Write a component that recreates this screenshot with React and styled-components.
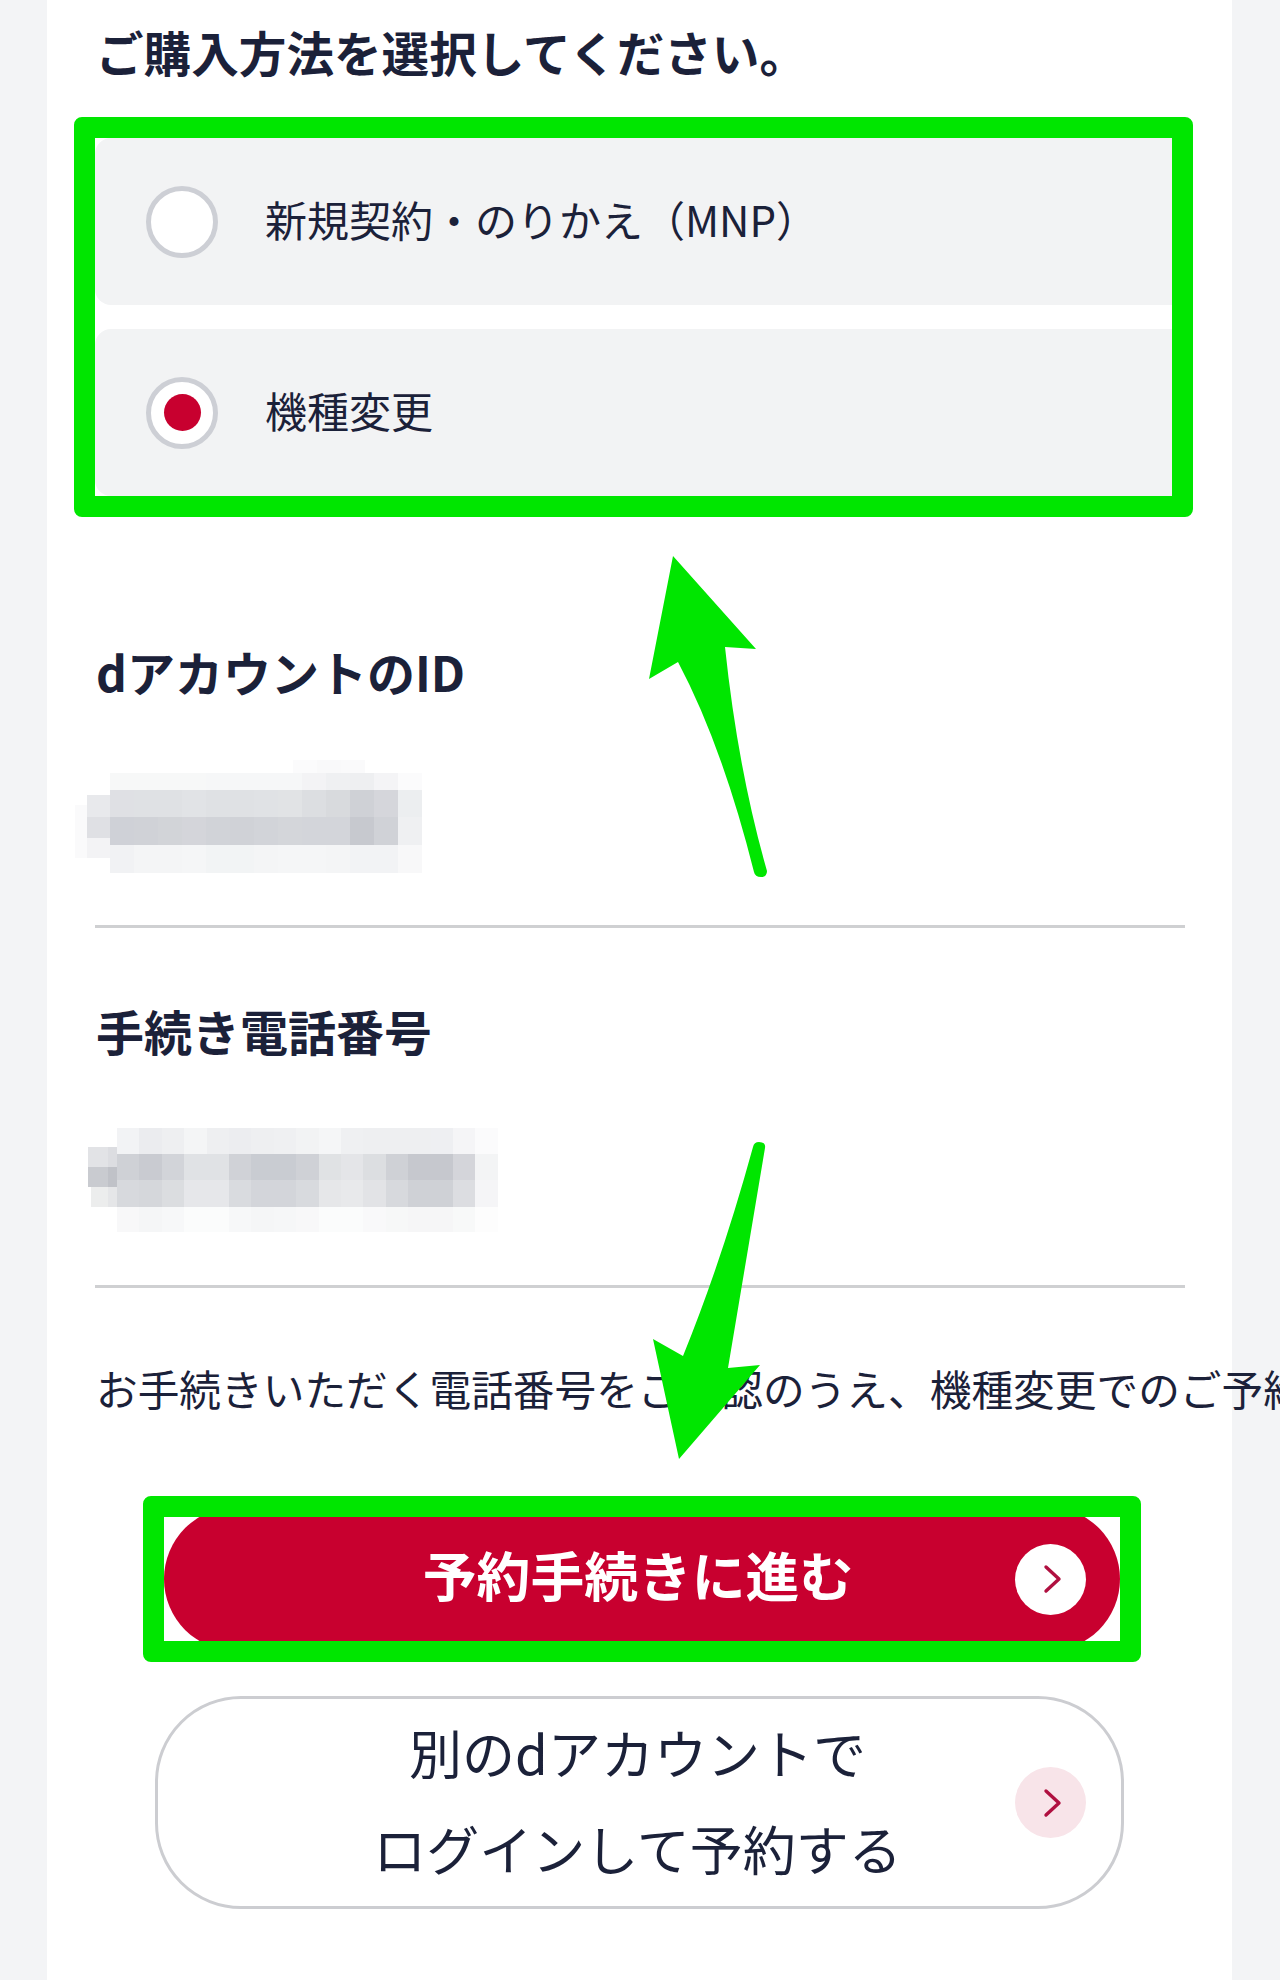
import React from 'react';
import styled, {createGlobalStyle} from 'styled-components';

const GlobalStyle = createGlobalStyle`
  html, body {
    margin: 0;
    padding: 0;
    overflow: hidden;
    background: #f3f4f6;
  }
  body {
    font-family: "Noto Sans CJK JP", "Noto Sans", sans-serif;
    color: #1b2139;
  }
`;

const Page = styled.div`
  position: relative;
  width: 1280px;
  height: 1980px;
  overflow: hidden;
  background: #f3f4f6;
`;

const Card = styled.main`
  width: 1185px;
  height: 1980px;
  margin-left: 47px;
  padding-top: 24px;
  box-sizing: border-box;
  background: #fff;
`;

const Heading = styled.h2`
  margin: 0 0 0 49px;
  font-size: 47.6px;
  line-height: 56px;
  font-weight: 700;
  letter-spacing: 0;
  white-space: nowrap;
`;

const Highlight = styled.div`
  box-sizing: border-box;
  border: 21px solid #00e600;
  border-radius: 8px;
  background: #fff;
`;

const OptionGroup = styled(Highlight)`
  width: 1119px;
  margin: 37px 0 0 27px;
  display: flex;
  flex-direction: column;
  gap: 24px;
`;

const Option = styled.label`
  display: flex;
  align-items: center;
  gap: 47px;
  height: 167px;
  padding-left: 51px;
  border-radius: 16px 0 0 16px;
  background: #f2f3f4;
  white-space: nowrap;
`;

const OptionText = styled.span`
  margin-bottom: 7px;
  font-size: 42px;
`;

const Radio = styled.span`
  display: flex;
  align-items: center;
  justify-content: center;
  flex: none;
  box-sizing: border-box;
  width: 72px;
  height: 72px;
  border: 5px solid #cdcfd5;
  border-radius: 50%;
  background: #fff;
  &::after {
    content: '';
    display: ${props => (props.$checked ? 'block' : 'none')};
    width: 37px;
    height: 37px;
    border-radius: 50%;
    background: #c8002f;
  }
`;

const Label = styled.h3`
  margin: ${props => props.$top}px 0 0 49px;
  font-size: 48px;
  line-height: 56px;
  font-weight: 700;
  white-space: nowrap;
`;

const Mosaic = styled.svg`
  display: block;
  margin-top: ${props => props.$top}px;
  margin-left: ${props => props.$left}px;
`;

const Divider = styled.hr`
  width: 1090px;
  height: 3px;
  margin: ${props => props.$top}px 0 0 48px;
  border: 0;
  background: #cfd0d2;
`;

const Notice = styled.p`
  margin: 72px 0 0 49px;
  font-size: 41.7px;
  line-height: 56px;
  white-space: nowrap;
`;

const ButtonFrame = styled(Highlight)`
  width: 998px;
  height: 166px;
  margin: 80px 0 0 96px;
  overflow: hidden;
`;

// taller than the frame on purpose, the green border cuts off the top and bottom of the pill
const PrimaryButton = styled.button`
  display: grid;
  grid-template-columns: 71px 1fr 71px;
  align-items: center;
  box-sizing: border-box;
  width: 100%;
  height: 144px;
  margin-top: -10px;
  padding: 0 34px 0 26px;
  border: 0;
  border-radius: 72px;
  background: #c8002f;
  color: #fff;
  font-family: inherit;
  font-size: 53.8px;
  font-weight: 700;
`;

const SecondaryButton = styled.button`
  display: grid;
  grid-template-columns: 71px 1fr 71px;
  align-items: center;
  box-sizing: border-box;
  width: 969px;
  height: 213px;
  margin: 34px 0 0 108px;
  padding: 0 35px 0 31px;
  border: 3px solid #cccdd1;
  border-radius: 86px;
  background: #fff;
  color: #1b2139;
  font-family: inherit;
  font-size: 53px;
  line-height: 96px;
  font-weight: 400;
`;

const ButtonText = styled.span`
  grid-column: 2;
  margin-bottom: ${props => props.$lift}px;
  text-align: center;
  white-space: nowrap;
`;

const ArrowBadge = styled.span`
  grid-column: 3;
  display: flex;
  align-items: center;
  justify-content: center;
  width: 71px;
  height: 71px;
  border-radius: 50%;
  background: ${props => (props.$soft ? '#f8e4e9' : '#fff')};
`;

const Overlay = styled.svg`
  position: absolute;
  top: 0;
  left: 0;
  pointer-events: none;
`;

function Chevron() {
    return (
        <svg width="20" height="30" viewBox="0 0 20 30" style={{marginLeft: 5}}>
            <path d="M3 3 L16 15 L3 27" fill="none" stroke="#b01040" strokeWidth="3.4" strokeLinecap="round" strokeLinejoin="round"/>
        </svg>
    );
}

// blurred out account values, one [y, height, x, width, colours...] per strip
const idCells = [
    {y: 0, h: 13, x: 218, w: 24, c: ['#fbfbfc', '#f9f9fa', '#fafafb']},
    {y: 13, h: 17, x: 35, w: 24, c: ['#f7f8f8', '#f7f8f8', '#f7f8f8', '#f7f8f8', '#f6f7f8', '#f6f7f8', '#f6f7f8', '#f6f7f8', '#f3f3f5', '#eff0f2', '#eeeff1', '#f4f4f6', '#fbfbfc']},
    {y: 30, h: 27, x: 35, w: 24, c: ['#dfe0e4', '#dfe1e4', '#dfe1e4', '#e1e3e6', '#dfe1e4', '#dfe1e4', '#e0e2e5', '#e1e3e5', '#dcdee1', '#d8dadd', '#cfd1d6', '#d5d6db', '#eceef0']},
    {y: 57, h: 28, x: 35, w: 24, c: ['#cfd1d7', '#d0d2d7', '#d2d4d8', '#d4d5da', '#d1d3d8', '#d0d2d7', '#d2d4d9', '#d4d6da', '#d3d5da', '#d3d5da', '#c7c9cf', '#d0d2d7', '#eff0f2']},
    {y: 85, h: 28, x: 35, w: 24, c: ['#f1f2f4', '#f4f5f6', '#f4f5f6', '#f5f6f7', '#f2f4f5', '#f2f4f5', '#f4f5f6', '#f5f6f7', '#f5f6f7', '#f4f5f6', '#f2f3f5', '#f2f3f5', '#f8f8f9']},
    {y: 35, h: 22, x: 12, w: 23, c: ['#e8e9ec']},
    {y: 57, h: 21, x: 12, w: 23, c: ['#dfe0e4']},
    {y: 78, h: 20, x: 12, w: 23, c: ['#f3f3f5']},
    {y: 45, h: 53, x: 0, w: 12, c: ['#fafafb']},
];

const phoneCells = [
    {y: 0, h: 26, x: 29, w: 22.4, c: ['#f2f3f5', '#ebecef', '#eeeff1', '#f4f5f6', '#eeeff1', '#ecedf0', '#eeeff1', '#eff0f2', '#f2f3f4', '#f5f6f7', '#eff0f2', '#eeeff1', '#eeeff1', '#eeeff1', '#eeeff2', '#f5f5f7', '#fbfbfc']},
    {y: 26, h: 26, x: 29, w: 22.4, c: ['#cfd1d6', '#c9cbd1', '#d2d4d9', '#e0e2e5', '#e0e2e5', '#d0d2d7', '#c9ccd2', '#c9ccd2', '#cfd1d6', '#e0e2e4', '#e4e5e8', '#dcdee1', '#cfd1d6', '#c6c8ce', '#c6c8ce', '#d4d5da', '#f3f4f5']},
    {y: 52, h: 27, x: 29, w: 22.4, c: ['#d7d9dd', '#d5d7db', '#dbdde0', '#e6e7ea', '#e6e7ea', '#d9dbdf', '#d3d5da', '#d3d5da', '#d8dade', '#e6e7e9', '#e8e9eb', '#e2e3e6', '#d7d9dd', '#cfd1d6', '#cfd1d6', '#dcdde1', '#f5f5f7']},
    {y: 79, h: 25, x: 29, w: 22.4, c: ['#f8f8f9', '#f5f6f7', '#f7f8f9', '#fbfcfc', '#fbfcfc', '#f7f8f9', '#f5f6f7', '#f6f7f8', '#f8f8f9', '#fbfcfc', '#fbfcfc', '#f9f9fa', '#f7f8f8', '#f6f6f7', '#f6f6f7', '#f8f9f9', '#fdfdfd']},
    {y: 19, h: 20, x: 0, w: 20, c: ['#e2e3e6']},
    {y: 19, h: 20, x: 20, w: 9, c: ['#dcdde1']},
    {y: 39, h: 20, x: 0, w: 20, c: ['#c9cbd0']},
    {y: 39, h: 20, x: 20, w: 9, c: ['#c0c2c8']},
    {y: 59, h: 20, x: 3, w: 17, c: ['#eceded']},
    {y: 59, h: 20, x: 20, w: 9, c: ['#e5e6e8']},
];

function MaskedValue({cells, width, height, top, left}) {
    return (
        <Mosaic $top={top} $left={left} width={width} height={height} shapeRendering="crispEdges" aria-hidden="true">
            {cells.map(row => row.c.map((fill, i) => (
                <rect key={`${row.y}-${row.x}-${i}`} x={row.x + row.w * i} y={row.y} width={row.w} height={row.h} fill={fill}/>
            )))}
        </Mosaic>
    );
}

function App() {
    return (
        <Page>
            <GlobalStyle/>
            <Card>
                <Heading>ご購入方法を選択してください。</Heading>
                <OptionGroup>
                    <Option><Radio/><OptionText>新規契約・のりかえ（MNP）</OptionText></Option>
                    <Option><Radio $checked/><OptionText>機種変更</OptionText></Option>
                </OptionGroup>

                <Label $top={126}>dアカウントのID</Label>
                <MaskedValue cells={idCells} width={365} height={113} top={61} left={28}/>
                <Divider $top={52}/>

                <Label $top={74}>手続き電話番号</Label>
                <MaskedValue cells={phoneCells} width={410} height={104} top={70} left={41}/>
                <Divider $top={53}/>

                <Notice>お手続きいただく電話番号をご確認のうえ、機種変更でのご予約をお願いします。</Notice>

                <ButtonFrame>
                    <PrimaryButton>
                        <ButtonText $lift={12}>予約手続きに進む</ButtonText>
                        <ArrowBadge><Chevron/></ArrowBadge>
                    </PrimaryButton>
                </ButtonFrame>
                <SecondaryButton>
                    <ButtonText $lift={6}>別のdアカウントで<br/>ログインして予約する</ButtonText>
                    <ArrowBadge $soft><Chevron/></ArrowBadge>
                </SecondaryButton>
            </Card>
            <Overlay width="1280" height="1980" aria-hidden="true">
                <path d="M673 556 L756 649 L725 647 Q738 770 767 871 Q767 877 761 877 Q755 877 754 872 Q722 745 678 662 L649 679 Z" fill="#00e600"/>
                <path d="M759 1142 Q766 1142 765 1148 L728 1368 L760 1365 L679 1459 L653 1339 L683 1356 Q722 1260 753 1147 Q754 1142 759 1142 Z" fill="#00e600"/>
            </Overlay>
        </Page>
    );
}

export default App;
